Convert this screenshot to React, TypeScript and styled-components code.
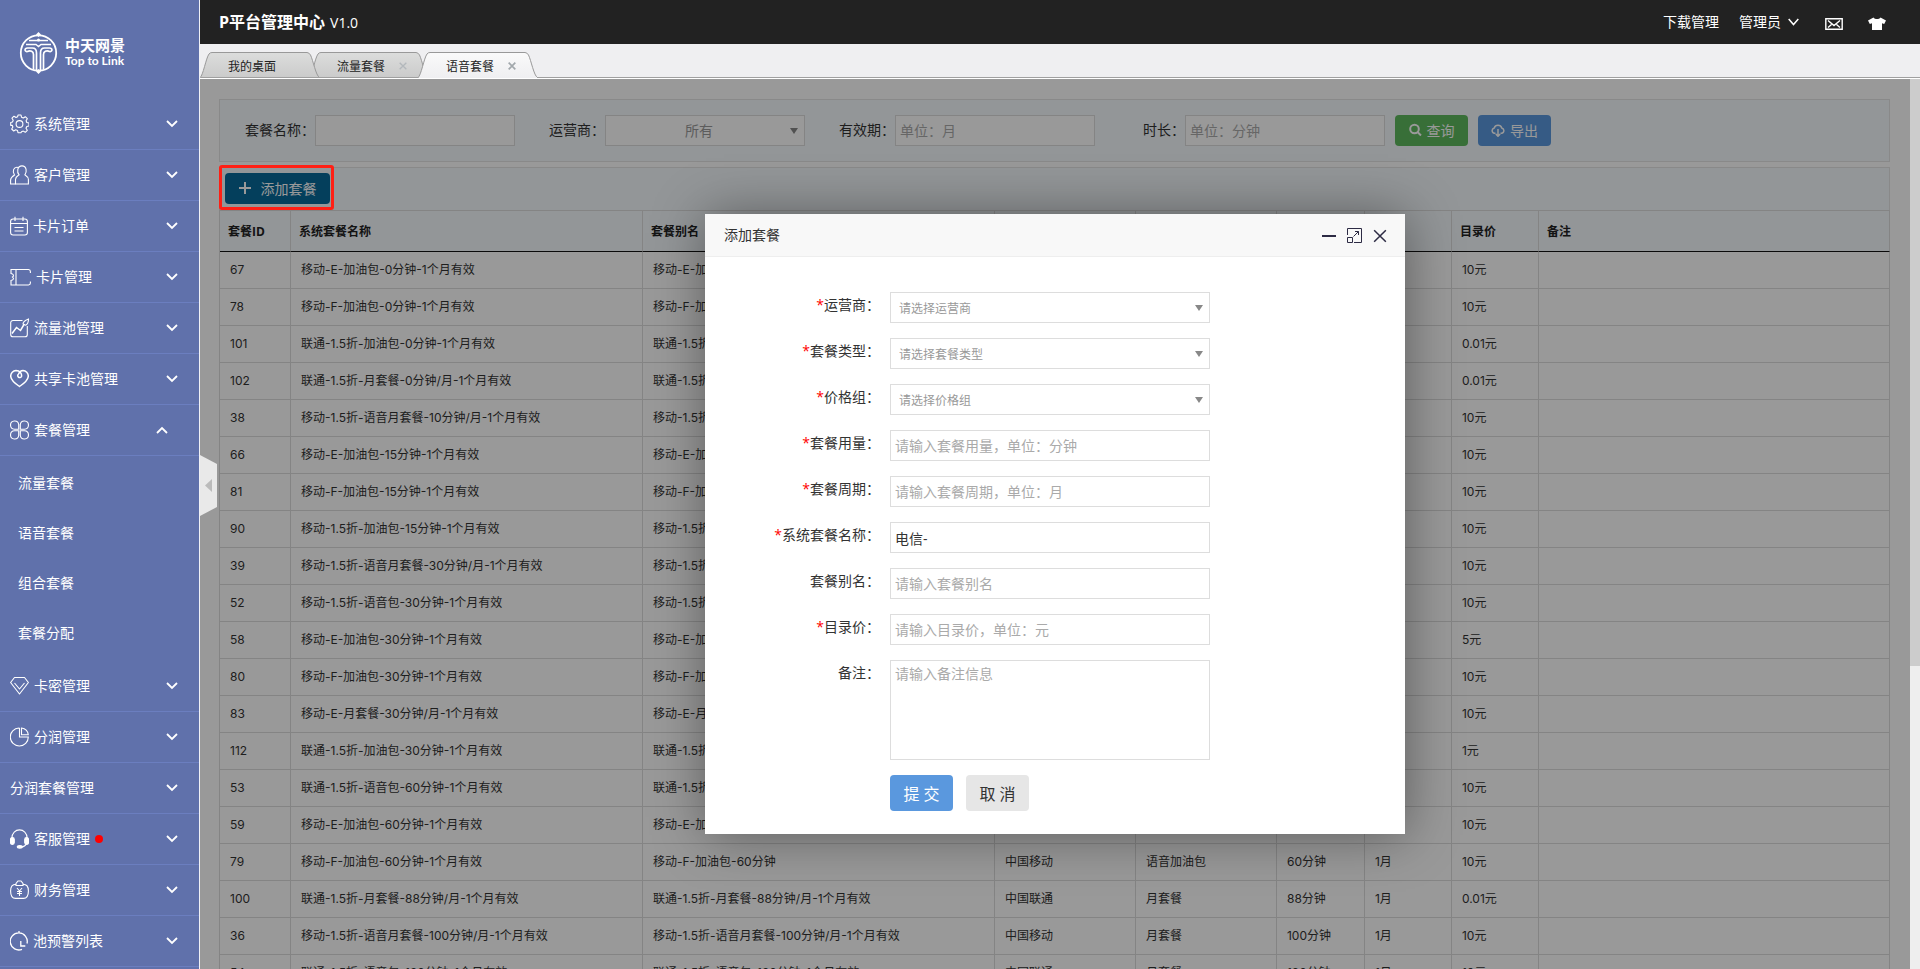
import React from 'react';
import styled, { createGlobalStyle, css } from 'styled-components';

const font = '"Open Sans", "Noto Sans CJK SC", sans-serif';

const GlobalStyle = createGlobalStyle`
  *, *::before, *::after { box-sizing: border-box; }
  body { margin: 0; background: #fff; }
  body, button, input, select, textarea { font-family: ${font}; font-size: 14px; }
  button { border: 0; padding: 0; background: none; cursor: pointer; }
  a { color: inherit; text-decoration: none; }
`;

/* ---------- page frame ---------- */

const Page = styled.div`
  display: grid;
  grid-template-columns: 200px minmax(0, 1fr);
  height: 100vh;
  overflow: hidden;
  color: #333;
`;

const Sidebar = styled.aside`
  display: flex;
  flex-direction: column;
  overflow: hidden;
  background: #6071ab;
  border-right: 1px solid #f0f1f6;
  color: #fff;
`;

const Brand = styled.div`
  display: flex;
  flex: none;
  align-items: flex-start;
  gap: 7px;
  height: 99px;
  padding: 32px 0 0 19px;
`;

const BrandText = styled.div`
  display: flex;
  flex-direction: column;
  padding-top: 4px;
  font-weight: 700;
  white-space: nowrap;
`;

const BrandName = styled.span`
  font-size: 15px;
  line-height: 18px;
`;

const BrandSlogan = styled.span`
  font-family: Lato, sans-serif;
  font-size: 12px;
  line-height: 14px;
`;

const Menu = styled.nav`
  display: flex;
  flex-direction: column;
`;

const MenuItem = styled.button<{ $open?: boolean }>`
  display: flex;
  flex: none;
  align-items: center;
  gap: 5px;
  height: 51px;
  padding: 0 ${p => (p.$open ? 31 : 21)}px 0 10px;
  border-bottom: 1px solid #6b7ebf;
  color: #fff;
  text-align: left;
`;

const MenuLabel = styled.span`
  display: flex;
  flex: 1;
  align-items: center;
  gap: 5px;
  line-height: 20px;
`;

const Dot = styled.i`
  width: 8px;
  height: 8px;
  border-radius: 50%;
  background: #f00;
`;

const SubMenu = styled.div`
  display: flex;
  flex: none;
  flex-direction: column;
  padding: 2px 0 3px;
`;

const SubLink = styled.a`
  height: 50px;
  padding-left: 18px;
  line-height: 50px;
`;

const Main = styled.div`
  display: flex;
  flex-direction: column;
  min-width: 0;
  min-height: 0;
`;

const TopBar = styled.header`
  display: flex;
  flex: none;
  align-items: center;
  justify-content: space-between;
  height: 44px;
  padding: 0 34px 0 19px;
  background: #222;
  color: #fff;
`;

const Title = styled.h1`
  display: flex;
  align-items: baseline;
  gap: 5px;
  margin: 0;
  font-size: 16px;
  line-height: 24px;
`;

const Version = styled.small`
  font-size: 14px;
  font-weight: 400;
`;

const TopLinks = styled.div`
  display: flex;
  align-items: center;
  gap: 20px;
`;

const TopLink = styled.a`
  display: flex;
  align-items: center;
  gap: 7px;
  line-height: 20px;
`;

const TopIcons = styled.div`
  display: flex;
  align-items: center;
  gap: 25px;
  padding: 3px 0 0 6px;
`;

/* ---------- tabs ---------- */

const TabBar = styled.div`
  display: flex;
  flex: none;
  align-items: flex-end;
  height: 35px;
  border-bottom: 1px solid #fff;
  background: linear-gradient(#a0a0a0, #a0a0a0) bottom / 100% 1px no-repeat #efeff1;
`;

const Tab = styled.div<{ $level: number }>`
  position: relative;
  z-index: ${p => p.$level};
  display: flex;
  align-items: center;
  justify-content: space-between;
  width: 120px;
  height: 26px;
  margin-right: -11px;
  padding: 1px 22px 0 28px;
  color: #222;
  font-size: 12px;
`;

const TabShape = styled.svg`
  position: absolute;
  inset: 0;
  z-index: -1;
`;

const TabClose = styled.button`
  display: flex;
`;

/* ---------- content ---------- */

const Content = styled.div`
  position: relative;
  display: grid;
  flex: 1;
  grid-template-columns: minmax(0, 1fr) 10px;
  min-height: 0;
`;

const Scroller = styled.main`
  min-width: 0;
  overflow: hidden;
  padding: 20px 20px 0 19px;
  background: #fff;
`;

const ScrollTrack = styled.div`
  background: #eee;
`;

const ScrollThumb = styled.div`
  height: 66%;
  background: #ccc;
`;

const Panel = styled.section`
  display: flex;
  align-items: center;
  border: 1px solid #e5e5e5;
  background: #f5fafe;
`;

const FilterPanel = styled(Panel)`
  gap: 10px;
  height: 63px;
  margin-bottom: 5px;
  padding-left: 25px;
`;

const Filter = styled.label`
  display: flex;
  align-items: center;
  margin-right: 24px;

  &:nth-of-type(4) { margin-right: 0; }
`;

const FilterName = styled.span`
  min-width: 56px;
  padding-bottom: 2px;
  line-height: 20px;
  text-align: right;
`;

const box = css`
  width: 100%;
  height: 31px;
  border: 1px solid #ddd;
  border-radius: 0;
  background: #fff;
  color: #333;
  outline: 0;
`;

const Input = styled.input`
  ${box}
  padding: 0 4px;

  &::placeholder { color: #aaa; }
`;

const TextArea = styled.textarea`
  ${box}
  display: block;
  height: 100px;
  padding: 3px 4px;
  line-height: 20px;
  resize: none;

  &::placeholder { color: #aaa; }
`;

const SelectBox = styled.span`
  position: relative;
  display: block;
  width: 100%;

  &::after {
    content: '';
    position: absolute;
    top: 13px;
    right: 7px;
    border: 4px solid transparent;
    border-top: 6px solid #888;
    border-bottom: 0;
    pointer-events: none;
  }
`;

const Select = styled.select<{ $centered?: boolean }>`
  ${box}
  appearance: none;
  padding: ${p => (p.$centered ? '0 16px 0 4px' : '2px 16px 0 8px')};
  color: #999;
  font-size: ${p => (p.$centered ? 14 : 12)}px;
  text-align: ${p => (p.$centered ? 'center' : 'left')};
  text-align-last: ${p => (p.$centered ? 'center' : 'left')};
`;

const FilterControl = styled.span`
  display: block;
  width: 200px;
`;

const ToolButton = styled.button<{ $color: string }>`
  display: flex;
  align-items: center;
  justify-content: center;
  gap: 5px;
  width: 73px;
  height: 31px;
  padding-bottom: 2px;
  border-radius: 4px;
  background: ${p => p.$color};
  color: #fff;
`;

const AddButton = styled(ToolButton)`
  gap: 10px;
  width: 105px;
  padding-bottom: 0;
`;

const Toolbar = styled(Panel)`
  height: 43px;
  padding: 0 0 2px 5px;
  border-bottom: 0;
`;

const Highlighted = styled.div`
  position: relative;
`;

const HighlightFrame = styled.span`
  position: absolute;
  inset: -8px -4px -6px -6px;
  z-index: 6;
  border: 3px solid #ff1f14;
  border-radius: 3px;
  pointer-events: none;
`;

const Table = styled.table`
  width: 100%;
  border: 1px solid #ddd;
  border-width: 1px 0 0 1px;
  border-spacing: 0;
  table-layout: fixed;
  font-size: 12px;
  line-height: 20px;
`;

const Th = styled.th`
  height: 41px;
  padding: 2px 8px 0;
  border-right: 1px solid #ddd;
  border-bottom: 1px solid #111;
  background: #f5fafe;
  color: #222;
  text-align: left;
  white-space: nowrap;
`;

const Td = styled.td`
  height: 37px;
  padding: 0 10px;
  border-right: 1px solid #ddd;
  border-bottom: 1px solid #ddd;
  font-family: Inter, "Noto Sans CJK SC", sans-serif;
  white-space: nowrap;
`;

const CollapseHandle = styled.button`
  position: absolute;
  top: 376px;
  left: 0;
  z-index: 7;
  display: flex;
`;

/* ---------- dialog ---------- */

const Overlay = styled.div`
  position: absolute;
  inset: 0 10px 0 0;
  z-index: 5;
  display: flex;
  align-items: center;
  justify-content: center;
  background: rgba(0, 0, 0, 0.4);
`;

const Dialog = styled.section`
  width: 700px;
  background: #fff;
  box-shadow: 1px 1px 50px rgba(0, 0, 0, 0.4);
`;

const DialogHeader = styled.header`
  display: flex;
  align-items: center;
  justify-content: space-between;
  height: 43px;
  padding: 0 18px 0 19px;
  border-bottom: 1px solid #eee;
  background: #f8f8f8;
`;

const DialogTitle = styled.h2`
  margin: 0;
  font-size: 14px;
  font-weight: 400;
  line-height: 20px;
`;

const DialogTools = styled.div`
  display: flex;
  align-items: center;
  gap: 11px;
  padding-top: 1px;
`;

const IconButton = styled.button`
  display: flex;
  color: #2d2b44;
`;

const Form = styled.form`
  display: flex;
  flex-direction: column;
  gap: 15px;
  padding: 35px 0 23px;
`;

const Field = styled.div`
  display: grid;
  grid-template-columns: 175px 320px;
  column-gap: 10px;
  align-items: start;
`;

const FieldLabel = styled.label`
  line-height: 26px;
  text-align: right;
`;

const Star = styled.span`
  color: #f00;
`;

const Actions = styled.div`
  display: flex;
  grid-column: 2;
  gap: 13px;
`;

const ActionButton = styled.button<{ $primary?: boolean }>`
  width: 63px;
  height: 36px;
  border-radius: 4px;
  background: ${p => (p.$primary ? '#5a98de' : '#e6e6e6')};
  color: ${p => (p.$primary ? '#fff' : '#333')};
  font-size: 16px;
`;

/* ---------- icons ---------- */

const Icon = ({ w = 19, children }: { w?: number; children: React.ReactNode }) => (
  <svg width={w} height="20" viewBox={`0 0 ${w} 20`} fill="none" stroke="#fff" strokeWidth="1.1" aria-hidden="true">
    {children}
  </svg>
);

const icons: Record<string, React.ReactNode> = {
  gear: (
    <Icon>
      <circle cx="9.5" cy="10" r="3.4" />
      <path d="M8 1h3l.5 2.2 1.8.8 2-1.3 2 2-1.2 2 .7 1.8 2.2.5v3l-2.2.5-.8 1.8 1.3 2-2 2-2-1.2-1.8.7L11 18.700H8l-.5-2.200-1.800-.700-2 1.200-2-2 1.200-2-.700-1.800L.7 11.500v-3L2.500 8l.7-1.800-1.200-2 2-2 2 1.300 1.600-.700z" strokeLinejoin="round" />
    </Icon>
  ),
  users: (
    <Icon>
      <path d="M5.500 19v-4.500c0-2.500 1.800-3.500 3.600-4.700-2.400-2.400-2-8.900 2.900-8.900s5 6.500 2.900 8.900c1.800 1.200 3.500 2.200 3.500 4.700V19z" />
      <path d="M8.500 2.500c-5-1.500-6.500 4-4 7.500-2 1.300-3.800 2.500-3.900 5V19h5" />
    </Icon>
  ),
  calendar: (
    <Icon w={18}>
      <rect x="0.600" y="3" width="16.800" height="16" rx="2.500" />
      <path d="M1 7.500h16M5 .8V5m8-4.200V5M4.500 11.500h9M4.500 15h9" />
    </Icon>
  ),
  ticket: (
    <Icon w={21}>
      <path d="M20.400 6V4.500A2 2 0 0 0 18.500 2.500H1v4c3 .5 3 2.500 1.500 3.500 1.500 1 1.500 3-1.500 3.500v4.500h17.500a2 2 0 0 0 1.900-2V14.500M6 2.500v15.500" />
    </Icon>
  ),
  chart: (
    <Icon>
      <path d="M12.500 2.500H3A2.300 2.300 0 0 0 .7 4.800V16.500A2.300 2.300 0 0 0 3 18.800h12a2.300 2.300 0 0 0 2.300-2.300V8" />
      <path d="M2 15.500l4.500-6 4 3 3.800-6.500" strokeWidth="1.500" />
      <path d="M13 6c0-2 3-4 5.500-5 0 3-.8 5.500-3 6.200z" />
    </Icon>
  ),
  heart: (
    <Icon>
      <path d="M9.500 17.500C5 14.500.7 11 .7 7A5.500 5.500 0 0 1 6 1.500c4 0 6 3 5.500 6a2 2 0 1 1-3-2.500C9.500 2.500 11.500 1.500 13 1.500a5.500 5.500 0 0 1 5.300 5.500c0 4-4.300 7.500-8.800 10.500z" strokeWidth="1.500" />
    </Icon>
  ),
  clover: (
    <Icon>
      <path d="M8.700 9.200V4.500A4.100 4.100 0 1 0 4.500 9.200zM10.300 9.200V4.500a4.100 4.100 0 1 1 4.200 4.700zM8.700 10.800v4.700a4.100 4.100 0 1 1-4.200-4.700zM10.300 10.800v4.700a4.100 4.100 0 1 0 4.200-4.700z" />
    </Icon>
  ),
  gem: (
    <Icon>
      <path d="M4.500 1.500h10l3.900 5-8.900 11.500L.6 6.500zM4.500 7l5 6 5-6" strokeLinejoin="round" />
    </Icon>
  ),
  pie: (
    <Icon>
      <path d="M9 1A9 9 0 1 0 18.300 10H9.500V.8M11.500 1c4 .5 6.300 3 6.800 6.700h-6.800z" />
    </Icon>
  ),
  headset: (
    <Icon>
      <path d="M1.800 9.500C1.800-2 17.200-2 17.200 9.500M16.500 14c-.8 3-3 4-6 4" />
      <rect x="0.500" y="8.500" width="3.800" height="7" rx="1.900" fill="#fff" />
      <rect x="14.700" y="8.500" width="3.800" height="7" rx="1.900" fill="#fff" />
      <ellipse cx="9.800" cy="17.800" rx="2.500" ry="1.300" fill="#fff" />
    </Icon>
  ),
  purse: (
    <Icon>
      <path d="M6 4.200C2.500 4.200.6 6.500.6 11S2.500 18.400 5.500 18.400h8c3 0 4.900-2.400 4.900-7.400s-2-6.800-5.400-6.800M6 5.500V3.500L8 1h3l2 2.500v2z" />
      <path d="M7 8l2.500 3L12 8M9.500 11v5M7 11.500h5M7 13.500h5" />
    </Icon>
  ),
  clock: (
    <Icon w={18}>
      <path d="M12 18.300A8.500 8.500 0 1 1 17 12.500M9 0v2.500M10.800 10v5h4.500" strokeWidth="1.300" />
    </Icon>
  ),
};

const Chevron = ({ up }: { up?: boolean }) => (
  <svg width="12" height="8" viewBox="0 0 12 8" fill="none" stroke="#fff" strokeWidth="1.800" aria-hidden="true">
    <path d={up ? 'M1 7l5-5 5 5' : 'M1 1l5 5 5-5'} />
  </svg>
);

const Logo = () => (
  <svg width="39" height="42" viewBox="0 0 39 42" fill="none" stroke="#fff" aria-hidden="true">
    <circle cx="19.500" cy="21" r="17.700" strokeWidth="1.800" />
    <path d="M19.500 0l2.500 2.500-2.500 2.500L17 2.500zM19.500 37l2.500 2.500-2.500 2.500-2.500-2.500z" fill="#fff" stroke="none" />
    <circle cx="19.500" cy="8" r="1.500" fill="#fff" stroke="none" />
    <path d="M10 8.500h19M7 12.500h10l2.500 2 2.500-2h10" strokeWidth="1.400" />
    <path d="M14.500 37.500V22.500c0-3-3-4.500-6-3-3 .5-3.500-3.500 0-3.500h5c3 0 4 2.500 4 5V38.500M24.500 37.500V22.500c0-3 3-4.500 6-3 3 .5 3.500-3.500 0-3.500h-5c-3 0-4 2.500-4 5V38.500" strokeWidth="1.700" />
  </svg>
);

const Shape = ({ active }: { active?: boolean }) => {
  const id = active ? 'tab-on' : 'tab-off';
  return (
    <TabShape width="120" height="26" viewBox="0 0 120 26" aria-hidden="true">
      <defs>
        <linearGradient id={id} x1="0" y1="0" x2="0" y2="1">
          <stop offset="0" stopColor={active ? '#fafafa' : '#dcdddc'} />
          <stop offset="1" stopColor={active ? '#efeff1' : '#cbcbcb'} />
        </linearGradient>
      </defs>
      <path
        d="M0 25.500C3 24 6 6 9 2Q10 .5 12 .5H107Q109 .5 110.500 3C113 8 116 24 119.500 25.500"
        fill={`url(#${id})`}
        stroke="#999"
      />
      <path d="M1 25.500H119" stroke={active ? '#efeff1' : '#a0a0a0'} />
    </TabShape>
  );
};

const Cross = ({ size, color, width }: { size: number; color: string; width: number }) => (
  <svg width={size} height={size} viewBox="0 0 12 12" fill="none" stroke={color} strokeWidth={width} aria-hidden="true">
    <path d="M1 1l10 10M11 1L1 11" />
  </svg>
);

/* ---------- data ---------- */

const menuTop = [
  ['gear', '系统管理'],
  ['users', '客户管理'],
  ['calendar', '卡片订单'],
  ['ticket', '卡片管理'],
  ['chart', '流量池管理'],
  ['heart', '共享卡池管理'],
];

const menuBottom = [
  ['gem', '卡密管理'],
  ['pie', '分润管理'],
  ['', '分润套餐管理'],
  ['headset', '客服管理'],
  ['purse', '财务管理'],
  ['clock', '池预警列表'],
];

const subMenu = ['流量套餐', '语音套餐', '组合套餐', '套餐分配'];

const columns: [string, number][] = [
  ['套餐ID', 71],
  ['系统套餐名称', 352],
  ['套餐别名', 352],
  ['运营商', 141],
  ['套餐类型', 141],
  ['用量', 88],
  ['周期', 87],
  ['目录价', 87],
  ['备注', 351],
];

const totalWidth = columns.reduce((sum, [, w]) => sum + w, 0);

const rows = [
  ['67', '移动-E-加油包-0分钟-1个月有效', '移动-E-加油包-0分钟', '中国移动', '语音加油包', '0分钟', '1月', '10元'],
  ['78', '移动-F-加油包-0分钟-1个月有效', '移动-F-加油包-0分钟', '中国移动', '语音加油包', '0分钟', '1月', '10元'],
  ['101', '联通-1.5折-加油包-0分钟-1个月有效', '联通-1.5折-加油包-0分钟', '中国联通', '语音加油包', '0分钟', '1月', '0.01元'],
  ['102', '联通-1.5折-月套餐-0分钟/月-1个月有效', '联通-1.5折-月套餐-0分钟/月', '中国联通', '月套餐', '0分钟', '1月', '0.01元'],
  ['38', '移动-1.5折-语音月套餐-10分钟/月-1个月有效', '移动-1.5折-语音月套餐-10分钟/月', '中国移动', '月套餐', '10分钟', '1月', '10元'],
  ['66', '移动-E-加油包-15分钟-1个月有效', '移动-E-加油包-15分钟', '中国移动', '语音加油包', '15分钟', '1月', '10元'],
  ['81', '移动-F-加油包-15分钟-1个月有效', '移动-F-加油包-15分钟', '中国移动', '语音加油包', '15分钟', '1月', '10元'],
  ['90', '移动-1.5折-加油包-15分钟-1个月有效', '移动-1.5折-加油包-15分钟', '中国移动', '语音加油包', '15分钟', '1月', '10元'],
  ['39', '移动-1.5折-语音月套餐-30分钟/月-1个月有效', '移动-1.5折-语音月套餐-30分钟/月', '中国移动', '月套餐', '30分钟', '1月', '10元'],
  ['52', '移动-1.5折-语音包-30分钟-1个月有效', '移动-1.5折-语音包-30分钟', '中国移动', '月套餐', '30分钟', '1月', '10元'],
  ['58', '移动-E-加油包-30分钟-1个月有效', '移动-E-加油包-30分钟', '中国移动', '语音加油包', '30分钟', '1月', '5元'],
  ['80', '移动-F-加油包-30分钟-1个月有效', '移动-F-加油包-30分钟', '中国移动', '语音加油包', '30分钟', '1月', '10元'],
  ['83', '移动-E-月套餐-30分钟/月-1个月有效', '移动-E-月套餐-30分钟/月', '中国移动', '月套餐', '30分钟', '1月', '10元'],
  ['112', '联通-1.5折-加油包-30分钟-1个月有效', '联通-1.5折-加油包-30分钟', '中国联通', '语音加油包', '30分钟', '1月', '1元'],
  ['53', '联通-1.5折-语音包-60分钟-1个月有效', '联通-1.5折-语音包-60分钟', '中国联通', '月套餐', '60分钟', '1月', '10元'],
  ['59', '移动-E-加油包-60分钟-1个月有效', '移动-E-加油包-60分钟', '中国移动', '语音加油包', '60分钟', '1月', '10元'],
  ['79', '移动-F-加油包-60分钟-1个月有效', '移动-F-加油包-60分钟', '中国移动', '语音加油包', '60分钟', '1月', '10元'],
  ['100', '联通-1.5折-月套餐-88分钟/月-1个月有效', '联通-1.5折-月套餐-88分钟/月-1个月有效', '中国联通', '月套餐', '88分钟', '1月', '0.01元'],
  ['36', '移动-1.5折-语音月套餐-100分钟/月-1个月有效', '移动-1.5折-语音月套餐-100分钟/月-1个月有效', '中国移动', '月套餐', '100分钟', '1月', '10元'],
  ['54', '联通-1.5折-语音包-120分钟-1个月有效', '联通-1.5折-语音包-120分钟-1个月有效', '中国联通', '月套餐', '120分钟', '1月', '10元'],
];

type FieldSpec = { id: string; label: string; required?: boolean; kind: 'select' | 'input' | 'area'; hint?: string; value?: string };

const fields: FieldSpec[] = [
  { id: 'operator', label: '运营商：', required: true, kind: 'select', hint: '请选择运营商' },
  { id: 'type', label: '套餐类型：', required: true, kind: 'select', hint: '请选择套餐类型' },
  { id: 'group', label: '价格组：', required: true, kind: 'select', hint: '请选择价格组' },
  { id: 'amount', label: '套餐用量：', required: true, kind: 'input', hint: '请输入套餐用量，单位：分钟' },
  { id: 'period', label: '套餐周期：', required: true, kind: 'input', hint: '请输入套餐周期，单位：月' },
  { id: 'name', label: '系统套餐名称：', required: true, kind: 'input', value: '电信-' },
  { id: 'alias', label: '套餐别名：', kind: 'input', hint: '请输入套餐别名' },
  { id: 'price', label: '目录价：', required: true, kind: 'input', hint: '请输入目录价，单位：元' },
  { id: 'remark', label: '备注：', kind: 'area', hint: '请输入备注信息' },
];

/* ---------- parts ---------- */

const MenuEntry = ({ icon, name }: { icon: string; name: string }) => (
  <MenuItem type="button">
    {icon && icons[icon]}
    <MenuLabel>
      {name}
      {icon === 'headset' && <Dot />}
    </MenuLabel>
    <Chevron />
  </MenuItem>
);

const FormField = ({ id, label, required, kind, hint, value }: FieldSpec) => (
  <Field>
    <FieldLabel htmlFor={id}>
      {required && <Star>*</Star>}
      {label}
    </FieldLabel>
    {kind === 'select' && (
      <SelectBox>
        <Select id={id}>
          <option>{hint}</option>
        </Select>
      </SelectBox>
    )}
    {kind === 'input' && <Input id={id} placeholder={hint} defaultValue={value} />}
    {kind === 'area' && <TextArea id={id} placeholder={hint} />}
  </Field>
);

const AddPackageDialog = () => (
  <Dialog role="dialog" aria-labelledby="dialog-title">
    <DialogHeader>
      <DialogTitle id="dialog-title">添加套餐</DialogTitle>
      <DialogTools>
        <IconButton type="button" aria-label="最小化">
          <svg width="15" height="15" viewBox="0 0 15 15" stroke="currentColor" strokeWidth="2">
            <path d="M1 8h14" />
          </svg>
        </IconButton>
        <IconButton type="button" aria-label="最大化">
          <svg width="15" height="15" viewBox="0 0 15 15" fill="none" stroke="currentColor">
            <path d="M.5 7V.5h14v14H7M.5 9.500h5v5h-5zM6.500 8.500l5-5M8 3.500h3.500V7" />
          </svg>
        </IconButton>
        <IconButton type="button" aria-label="关闭">
          <Cross size={14} color="#2d2b44" width={1.3} />
        </IconButton>
      </DialogTools>
    </DialogHeader>
    <Form onSubmit={e => e.preventDefault()}>
      {fields.map(f => (
        <FormField key={f.id} {...f} />
      ))}
      <Field>
        <Actions>
          <ActionButton $primary type="submit">提 交</ActionButton>
          <ActionButton type="button">取 消</ActionButton>
        </Actions>
      </Field>
    </Form>
  </Dialog>
);

export default function App() {
  return (
    <Page>
      <GlobalStyle />
      <Sidebar>
        <Brand>
          <Logo />
          <BrandText>
            <BrandName>中天网景</BrandName>
            <BrandSlogan>Top to Link</BrandSlogan>
          </BrandText>
        </Brand>
        <Menu>
          {menuTop.map(([icon, name]) => (
            <MenuEntry key={name} icon={icon} name={name} />
          ))}
          <MenuItem type="button" $open aria-expanded="true">
            {icons.clover}
            <MenuLabel>套餐管理</MenuLabel>
            <Chevron up />
          </MenuItem>
          <SubMenu>
            {subMenu.map(name => (
              <SubLink key={name} href="#">{name}</SubLink>
            ))}
          </SubMenu>
          {menuBottom.map(([icon, name]) => (
            <MenuEntry key={name} icon={icon} name={name} />
          ))}
        </Menu>
      </Sidebar>

      <Main>
        <TopBar>
          <Title>
            P平台管理中心 <Version>V1.0</Version>
          </Title>
          <TopLinks>
            <TopLink href="#">下载管理</TopLink>
            <TopLink href="#">
              管理员
              <svg width="11" height="8" viewBox="0 0 11 8" fill="none" stroke="#fff" strokeWidth="1.500">
                <path d="M.7 1l4.800 5.500L10.300 1" />
              </svg>
            </TopLink>
            <TopIcons>
              <svg width="18" height="12" viewBox="0 0 18 12" fill="none" stroke="#fff" strokeWidth="1.400">
                <path d="M.8.7h16.400v10.600H.8zM3 2.500l6 5 6-5M3 9.500l3.500-3M15 9.500l-3.500-3" />
              </svg>
              <svg width="18" height="13" viewBox="0 0 18 13" fill="#fff">
                <path d="M5.500.5C7 2.500 11 2.500 12.500.5L18 3.500l-1.800 3.500-2.200-.8V13H4V6.200l-2.200.8L0 3.500z" />
              </svg>
            </TopIcons>
          </TopLinks>
        </TopBar>

        <TabBar>
          <Tab $level={2}>
            <Shape />
            我的桌面
          </Tab>
          <Tab $level={1}>
            <Shape />
            流量套餐
            <TabClose type="button" aria-label="关闭">
              <Cross size={8} color="#b3b8bc" width={2} />
            </TabClose>
          </Tab>
          <Tab $level={3}>
            <Shape active />
            语音套餐
            <TabClose type="button" aria-label="关闭">
              <Cross size={8} color="#a2a8ac" width={2.5} />
            </TabClose>
          </Tab>
        </TabBar>

        <Content>
          <Scroller>
            <FilterPanel>
              <Filter>
                <FilterName>套餐名称：</FilterName>
                <FilterControl><Input /></FilterControl>
              </Filter>
              <Filter>
                <FilterName>运营商：</FilterName>
                <FilterControl>
                  <SelectBox>
                    <Select $centered><option>所有</option></Select>
                  </SelectBox>
                </FilterControl>
              </Filter>
              <Filter>
                <FilterName>有效期：</FilterName>
                <FilterControl><Input placeholder="单位：月" /></FilterControl>
              </Filter>
              <Filter>
                <FilterName>时长：</FilterName>
                <FilterControl><Input placeholder="单位：分钟" /></FilterControl>
              </Filter>
              <ToolButton type="button" $color="#5eb95e">
                <svg width="13" height="13" viewBox="0 0 13 13" fill="none" stroke="#fff" strokeWidth="2">
                  <circle cx="5.500" cy="6" r="4.300" />
                  <path d="M8.500 9l3.500 3.500" />
                </svg>
                查询
              </ToolButton>
              <ToolButton type="button" $color="#5a98de">
                <svg width="14" height="14" viewBox="0 0 14 14" fill="none" stroke="#fff" strokeWidth="1.500">
                  <path d="M4.500 10.300H3.500a2.700 2.700 0 0 1-.3-5.300 4 4 0 0 1 7.600 0 2.700 2.700 0 0 1-.3 5.300H9.500M7 6v7.500M4.800 11L7 13.300 9.200 11" />
                </svg>
                导出
              </ToolButton>
            </FilterPanel>

            <Toolbar>
              <Highlighted>
                <AddButton type="button" $color="#08699a">
                  <svg width="12" height="12" viewBox="0 0 12 12" stroke="#fff" strokeWidth="2">
                    <path d="M6 0v12M0 6h12" />
                  </svg>
                  添加套餐
                </AddButton>
                <HighlightFrame />
              </Highlighted>
            </Toolbar>

            <Table>
              <colgroup>
                {columns.map(([name, w]) => (
                  <col key={name} style={{ width: `${(w / totalWidth) * 100}%` }} />
                ))}
              </colgroup>
              <thead>
                <tr>
                  {columns.map(([name]) => (
                    <Th key={name} scope="col">{name}</Th>
                  ))}
                </tr>
              </thead>
              <tbody>
                {rows.map(row => (
                  <tr key={row[0]}>
                    {row.map((cell, i) => (
                      <Td key={i}>{cell}</Td>
                    ))}
                    <Td />
                  </tr>
                ))}
              </tbody>
            </Table>
          </Scroller>
          <ScrollTrack>
            <ScrollThumb />
          </ScrollTrack>

          <Overlay>
            <AddPackageDialog />
          </Overlay>

          <CollapseHandle type="button" aria-label="收起菜单">
            <svg width="17" height="61" viewBox="0 0 17 61">
              <path d="M0 0l17 9v43L0 61z" fill="#e9e9e9" />
              <path d="M12 24v13L5 30.500z" fill="#bbb" />
            </svg>
          </CollapseHandle>
        </Content>
      </Main>
    </Page>
  );
}
